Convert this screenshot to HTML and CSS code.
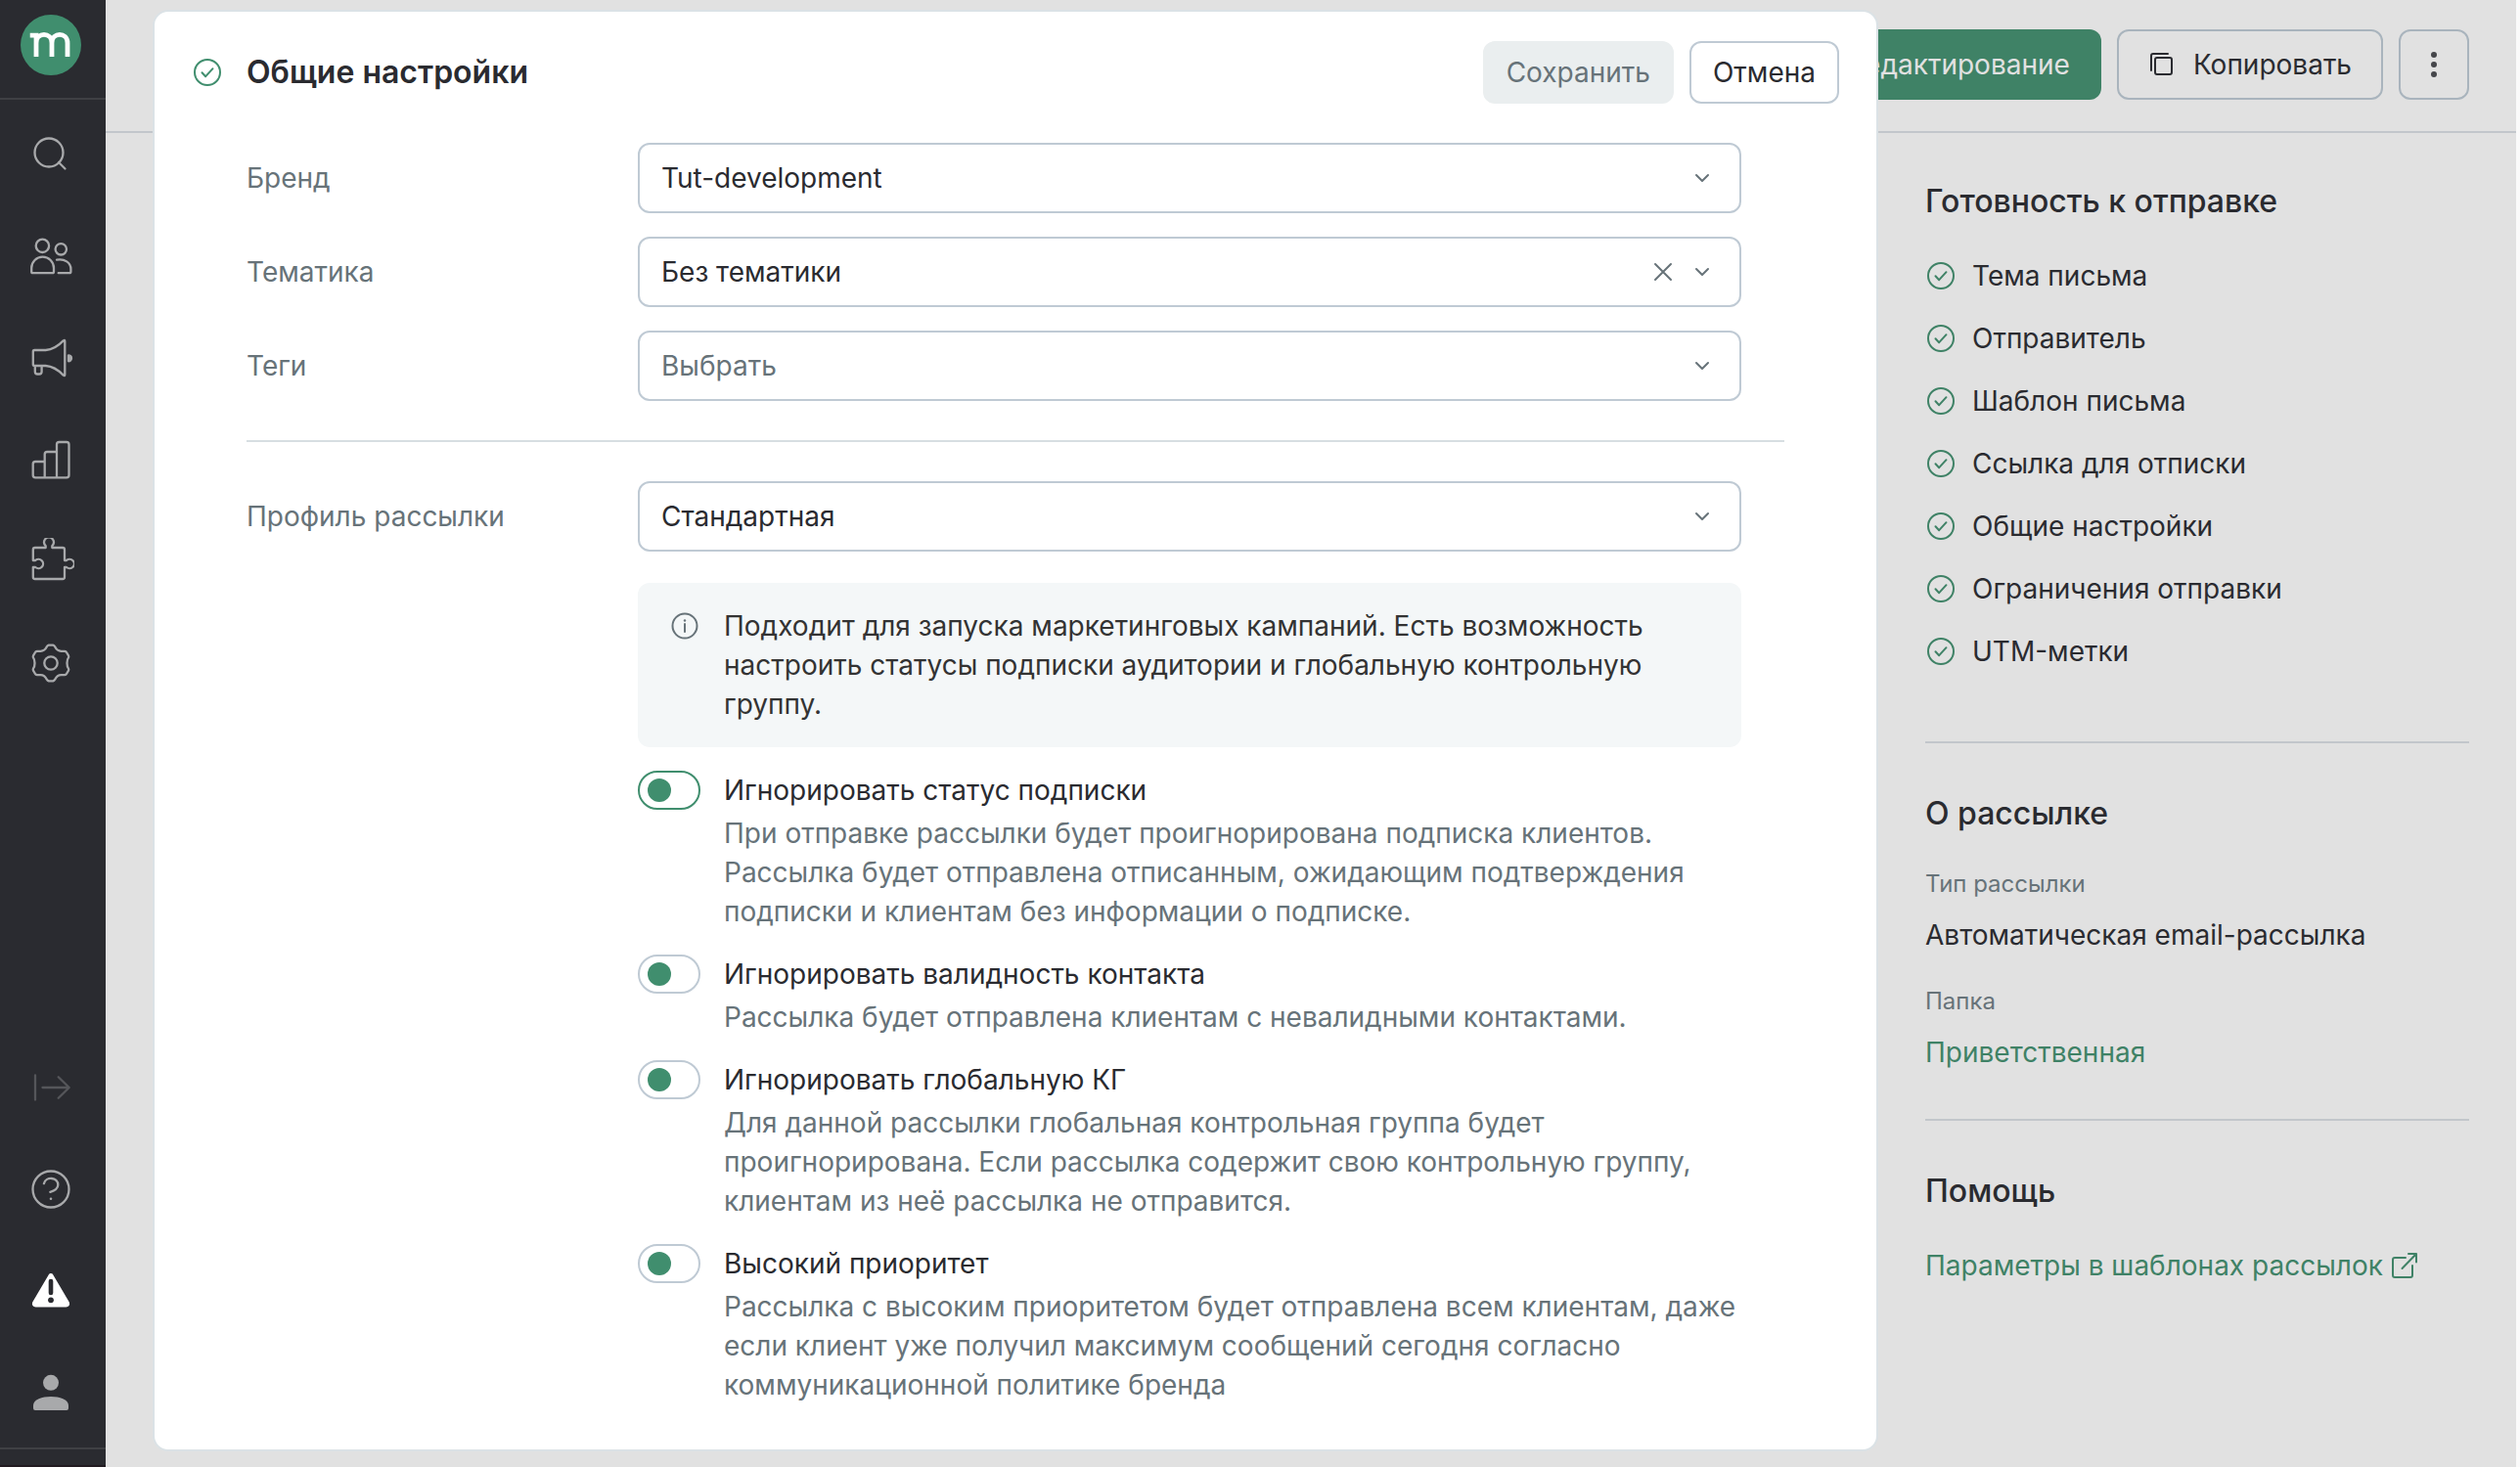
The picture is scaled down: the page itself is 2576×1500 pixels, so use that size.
FILE: index.html
```html
<!DOCTYPE html>
<html lang="ru">
<head>
<meta charset="utf-8">
<meta name="viewport" content="width=device-width, initial-scale=1">
<title>Общие настройки</title>
<link rel="stylesheet" href="styles.css">
</head>
<body>
<svg class="sprite" aria-hidden="true">
  <symbol id="check" viewBox="0 0 32 32">
    <circle cx="16" cy="16" r="13"/><path d="M10.5 16.3l3.7 3.9 7.3-8"/>
  </symbol>
  <symbol id="chevron" viewBox="0 0 16 16"><path d="M2 5l6 6 6-6"/></symbol>
</svg>

<nav class="sidebar" aria-label="Главное меню">
  <a class="logo" href="#" aria-label="Главная">
    <svg viewBox="0 0 64 64"><circle cx="32" cy="32" r="31" fill="#408e6e"/>
      <path d="M10.700 22.200H17V44M17 30C17 18.400 33 18.400 33 30V44M33 30C33 18.400 49 18.400 49 30V44" fill="none" stroke="#fff" stroke-width="4.800"/></svg>
  </a>
  <div class="nav-group">
    <button class="nav-item" aria-label="Поиск"><svg viewBox="0 0 48 48"><circle cx="22" cy="22" r="14.500"/><path d="M32 32l6.500 6.500"/></svg></button>
    <button class="nav-item" aria-label="Клиенты"><svg viewBox="0 0 48 48"><circle cx="15.400" cy="13.300" r="6.700"/><circle cx="34.300" cy="16.800" r="5.700"/><path d="M5.500 41.200h20q1.500 0 1.500-1.500V36a11.300 11.300 0 0 0-22.800 0v3.700q0 1.500 1.300 1.500zM30 27.600c8-1.500 14.400 3 14.400 9.400v2.700q0 1.500-1.500 1.500H31.700"/></svg></button>
    <button class="nav-item" aria-label="Кампании"><svg viewBox="0 0 48 48"><path d="M7.300 16h11.400c7-.5 13.600-5 18-9.600q1.600-1.200 1.600.6v34q0 1.800-1.600.6c-4.400-4.600-11-9.100-18-9.600H7.300q-1.500 0-1.500-1.500v-13q0-1.500 1.500-1.500zM7.800 32v6q0 2.500 2.500 2.500h1.800q2.500 0 2.500-2.500v-6"/><path class="solid" d="M42 21.300a3 3 0 0 1 0 6z"/></svg></button>
    <button class="nav-item" aria-label="Отчёты"><svg viewBox="0 0 48 48"><path d="M17.700 26H8.200q-2.500 0-2.500 2.500V40q0 2.300 2.500 2.300H40q2.500 0 2.500-2.300V8.500Q42.500 6 40 6h-7.500Q30 6 30 8.500v33.800M30 16h-9.800q-2.500 0-2.500 2.500v23.800"/></svg></button>
    <button class="nav-item" aria-label="Интеграции"><svg viewBox="0 0 48 48"><path d="M7.800 10h10.900V8.200a5 5 0 1 1 6.600 0V10H36q2 0 2 2v11h2a4.700 4.700 0 1 1 0 7h-2v10q0 2-2 2H7.800q-2 0-2-2V30h2.400a4.700 4.700 0 1 0 0-7H5.800V12q0-2 2-2z"/></svg></button>
    <button class="nav-item" aria-label="Настройки"><svg viewBox="0 0 48 48"><circle cx="24" cy="24" r="6.700"/><path d="M21.800 5.700h4.400q1.200.3 2 1.600c1.300 2.700 3.300 4.500 6.300 4.500H38q1.500.2 2 1.200l2 3.400q.5 1.200 0 2c-2 2.600-2 8.600 0 11.200q.5.800 0 2L40 35q-.5 1-2 1.200h-3.500c-3 0-5 1.800-6.300 4.500q-.8 1.300-2 1.600h-4.400q-1.200-.3-2-1.600c-1.300-2.700-3.300-4.500-6.300-4.500H10q-1.500-.2-2-1.200l-2-3.400q-.5-1.200 0-2c2-2.600 2-8.600 0-11.200q-.5-.8 0-2L8 13q.5-1 2-1.200h3.500c3 0 5-1.800 6.300-4.500q.8-1.300 2-1.600z"/></svg></button>
  </div>
  <div class="nav-group nav-bottom">
    <button class="nav-item dim" aria-label="Развернуть"><svg viewBox="0 0 48 48"><path d="M8 11.500v25M15.500 24h27M31.700 13.300L42.700 24l-11 10.700"/></svg></button>
    <button class="nav-item" aria-label="Справка"><svg viewBox="0 0 48 48"><circle cx="24" cy="24" r="18.500"/><path d="M16.900 18.200c2-7.600 14.600-6.800 14.400 1.600-.2 4.200-4.500 6-8 7"/><circle class="solid" cx="24" cy="33.700" r="1.300" stroke="none"/></svg></button>
    <button class="nav-item" aria-label="Предупреждения"><svg viewBox="0 0 48 48"><path d="M24 8.500L40.500 36.500Q41 38 39.500 38h-31Q7 38 7.500 36.500z" fill="#fff" stroke="#fff" stroke-width="5" stroke-linejoin="round"/><path d="M24 14l0 12" stroke="#2a2b30" stroke-width="4.600"/><circle cx="24" cy="33.300" r="2.900" fill="#2a2b30" stroke="none"/></svg></button>
    <button class="nav-item" aria-label="Профиль"><svg viewBox="0 0 48 48"><g class="solid" stroke="none"><circle cx="24" cy="13.800" r="8"/><path d="M6 37c0-12 36-12 36 0v3q0 2-2 2H8q-2 0-2-2z"/></g></svg></button>
  </div>
</nav>

<main class="page">
  <header class="topbar">
    <button class="btn btn-primary">Редактирование</button>
    <button class="btn btn-outline"><svg class="copy" viewBox="0 0 24 24"><rect x="5" y="5" width="17" height="17" rx="2"/><path d="M1 18V3q0-2 2-2h15"/></svg>Копировать</button>
    <button class="btn btn-outline btn-dots" aria-label="Ещё"><svg class="dots" viewBox="0 0 32 32"><circle cx="16" cy="6" r="3"/><circle cx="16" cy="16" r="3"/><circle cx="16" cy="26" r="3"/></svg></button>
  </header>

  <aside class="summary">
    <section>
      <h2>Готовность к отправке</h2>
      <ul class="checklist">
        <li><svg class="check"><use href="#check"/></svg>Тема письма</li>
        <li><svg class="check"><use href="#check"/></svg>Отправитель</li>
        <li><svg class="check"><use href="#check"/></svg>Шаблон письма</li>
        <li><svg class="check"><use href="#check"/></svg>Ссылка для отписки</li>
        <li><svg class="check"><use href="#check"/></svg>Общие настройки</li>
        <li><svg class="check"><use href="#check"/></svg>Ограничения отправки</li>
        <li><svg class="check"><use href="#check"/></svg>UTM-метки</li>
      </ul>
    </section>
    <section>
      <h2>О рассылке</h2>
      <dl class="facts">
        <dt>Тип рассылки</dt><dd>Автоматическая email-рассылка</dd>
        <dt>Папка</dt><dd><a href="#">Приветственная</a></dd>
      </dl>
    </section>
    <section>
      <h2>Помощь</h2>
      <a class="help-link" href="#">Параметры в шаблонах рассылок
        <svg viewBox="0 0 28 28"><path d="M15 6H4Q2 6 2 8v16q0 2 2 2h16q2 0 2-2V14M11.500 17L26 2M18 2h8v8.500"/></svg></a>
    </section>
  </aside>

  <section class="dialog" role="dialog" aria-labelledby="dialog-title">
    <header class="dialog-head">
      <svg class="check"><use href="#check"/></svg>
      <h1 id="dialog-title">Общие настройки</h1>
      <button class="btn-small btn-disabled" disabled>Сохранить</button>
      <button class="btn-small">Отмена</button>
    </header>
    <form class="form">
      <div class="fields">
        <label for="brand">Бренд</label>
        <div class="select"><select id="brand"><option>Tut-development</option></select><svg class="chevron"><use href="#chevron"/></svg></div>
        <label for="topic">Тематика</label>
        <div class="select"><select id="topic"><option>Без тематики</option></select><button class="clear" type="button" aria-label="Очистить"><svg viewBox="0 0 24 24"><path d="M4 4l16 16M20 4L4 20"/></svg></button><svg class="chevron"><use href="#chevron"/></svg></div>
        <label for="tags">Теги</label>
        <div class="select"><select id="tags" class="empty"><option>Выбрать</option></select><svg class="chevron"><use href="#chevron"/></svg></div>
      </div>
      <hr>
      <div class="fields">
        <label for="profile">Профиль рассылки</label>
        <div class="select"><select id="profile"><option>Стандартная</option></select><svg class="chevron"><use href="#chevron"/></svg></div>
      </div>
      <div class="options">
        <div class="note">
          <svg viewBox="0 0 32 32"><circle cx="16" cy="16" r="12.500"/><path d="M16 14v8"/><circle cx="16" cy="10.500" r="1.200" fill="#677379" stroke="none"/></svg>
          <p>Подходит для запуска маркетинговых кампаний. Есть возможность настроить статусы подписки аудитории и глобальную контрольную группу.</p>
        </div>
        <div class="option">
          <input class="toggle toggle-active" type="checkbox" id="o1"><label for="o1">Игнорировать статус подписки</label>
          <p>При отправке рассылки будет проигнорирована подписка клиентов. Рассылка будет отправлена отписанным, ожидающим подтверждения подписки и клиентам без информации о подписке.</p>
        </div>
        <div class="option">
          <input class="toggle" type="checkbox" id="o2"><label for="o2">Игнорировать валидность контакта</label>
          <p>Рассылка будет отправлена клиентам с невалидными контактами.</p>
        </div>
        <div class="option">
          <input class="toggle" type="checkbox" id="o3"><label for="o3">Игнорировать глобальную КГ</label>
          <p>Для данной рассылки глобальная контрольная группа будет проигнорирована. Если рассылка содержит свою контрольную группу, клиентам из неё рассылка не отправится.</p>
        </div>
        <div class="option">
          <input class="toggle" type="checkbox" id="o4"><label for="o4">Высокий приоритет</label>
          <p>Рассылка с высоким приоритетом будет отправлена всем клиентам, даже если клиент уже получил максимум сообщений сегодня согласно коммуникационной политике бренда</p>
        </div>
      </div>
    </form>
  </section>
</main>
</body>
</html>
```
FILE: styles.css
```css
:root {
  --green: #408e6e;
  --green-dim: #3f8266;
  --ink: #2a2b30;
  --muted: #677379;
  --line: #bfcad4;
  --line-dim: #c2c6cb;
}

* { box-sizing: border-box; }

body {
  margin: 0;
  min-height: 100vh;
  display: flex;
  background: #fafafa;
  color: var(--ink);
  font: 28px/40px Inter, "Noto Sans", sans-serif;
}

h1, h2, p, ul, dl, dd { margin: 0; padding: 0; }
button, select { font: inherit; color: inherit; }
svg { display: block; flex: none; fill: none; stroke-linecap: round; stroke-linejoin: round; }
a { color: var(--green-dim); text-decoration: none; }
.sprite { display: none; }

/* Sidebar */
.sidebar {
  flex: none;
  width: 108px;
  display: flex;
  flex-direction: column;
  background: var(--ink);
  border-bottom: 2px solid #211a20;
}
.logo {
  height: 102px;
  padding: 14px 20px;
  border-bottom: 2px solid #3f4044;
}
.logo svg { width: 64px; height: 64px; stroke-linecap: butt; stroke-linejoin: miter; }
.nav-group { padding: 4px 4px 4px 0; }
.nav-bottom {
  margin-top: auto;
  margin-bottom: 16px;
  border-bottom: 2px solid #3f4044;
}
.nav-item {
  display: grid;
  place-items: center;
  width: 100%;
  height: 104px;
  padding: 0;
  border: 0;
  background: none;
}
.nav-item svg { width: 48px; height: 48px; stroke: #a8a9ab; stroke-width: 2.3; }
.nav-item .solid { fill: #a8a9ab; }
.nav-item.dim svg { stroke: #55565a; }

/* Page under the dialog */
.page {
  position: relative;
  flex: 1;
  margin-right: 4px;
  background: #e1e1e1;
}
.topbar {
  display: flex;
  justify-content: flex-end;
  gap: 16px;
  padding: 30px 48px 32px;
  border-bottom: 2px solid var(--line-dim);
}
.btn {
  display: flex;
  align-items: center;
  height: 72px;
  padding: 0 30px 0 32px;
  border: 2px solid transparent;
  border-radius: 12px;
  background: none;
}
.btn-primary { background: var(--green-dim); color: #e1e1e1; }
.btn-outline { border-color: #a9b4bd; gap: 20px; }
.btn-dots { width: 72px; padding: 0; justify-content: center; }
.copy { width: 24px; height: 24px; stroke: var(--ink); stroke-width: 2; }
.dots { width: 32px; height: 32px; fill: #45464a; }

.check { width: 32px; height: 32px; stroke: var(--green-dim); stroke-width: 2; }
.summary {
  width: 556px;
  margin-left: auto;
  margin-right: 48px;
}
.summary section { padding: 50px 0 68px; }
.summary section + section { padding-top: 52px; border-top: 2px solid var(--line-dim); }
.summary h2 { font-size: 32px; font-weight: 500; }
.summary section:nth-child(2) { padding-bottom: 48px; }
.checklist { list-style: none; margin-bottom: -8px; padding: 24px 0 0; }
.checklist li { display: flex; align-items: center; gap: 16px; height: 64px; }
.facts dt { margin-top: 32px; font-size: 24px; color: var(--muted); }
.facts dd { margin-top: 12px; }
.facts dd + dt { margin-top: 28px; }
.help-link { display: flex; align-items: center; gap: 8px; margin-top: 36px; }
.help-link svg { width: 28px; height: 28px; stroke: var(--green-dim); stroke-width: 2; }

/* Dialog */
.dialog {
  position: absolute;
  top: 10px;
  left: 48px;
  right: 652px;
  padding-bottom: 46px;
  border: 2px solid #dbe2e6;
  border-radius: 16px;
  background: #fff;
}
.dialog-head {
  display: flex;
  align-items: center;
  gap: 16px;
  padding: 30px 38px 0;
}
.dialog-head .check { stroke: var(--green); }
.dialog-head h1 { flex: 1; padding-left: 8px; font-size: 32px; font-weight: 600; }
.btn-small {
  height: 64px;
  padding: 0 22px;
  border: 2px solid var(--line);
  border-radius: 12px;
  background: #fff;
}
.btn-disabled { border-color: #eaeeef; background: #eaeeef; color: var(--muted); }

.form { padding: 40px 94px 0; }
.fields {
  display: grid;
  grid-template-columns: 400px 1fr;
  align-items: center;
  row-gap: 24px;
  padding-right: 44px;
}
.fields label { color: var(--muted); }
.form hr { height: 2px; margin: 40px 0; border: 0; background: #d7dee2; }
.select { position: relative; }
.select select {
  display: block;
  width: 100%;
  height: 72px;
  padding: 0 104px 0 22px;
  border: 2px solid var(--line);
  border-radius: 12px;
  background: #fff;
  appearance: none;
}
.select .empty { color: var(--muted); }
.chevron {
  position: absolute;
  top: 28px;
  right: 32px;
  width: 16px;
  height: 16px;
  stroke: var(--muted);
  stroke-width: 2;
  pointer-events: none;
}
.clear {
  position: absolute;
  top: 24px;
  right: 68px;
  padding: 0;
  border: 0;
  background: none;
}
.clear svg { width: 24px; height: 24px; stroke: var(--muted); stroke-width: 2; }

.options {
  display: grid;
  gap: 24px;
  margin: 32px 44px 0 400px;
}
.note {
  display: flex;
  gap: 24px;
  padding: 24px 32px;
  border-radius: 12px;
  background: #f4f7f8;
  color: #333;
}
.note svg { width: 32px; height: 32px; margin-top: 4px; stroke: var(--muted); stroke-width: 2; }
.note p { margin-left: 2px; margin-left: 0; }
.option {
  display: grid;
  grid-template-columns: 64px 1fr;
  gap: 4px 24px;
}
.option p { grid-column: 2; color: var(--muted); }
.toggle {
  width: 64px;
  height: 40px;
  margin: 0;
  padding: 6px 8px;
  border: 2px solid var(--line);
  border-radius: 20px;
  background: #fff;
  appearance: none;
}
.toggle::before {
  content: "";
  display: block;
  width: 24px;
  height: 24px;
  border-radius: 50%;
  background: var(--green);
}
.toggle:checked::before { margin-left: auto; }
.toggle-active { border-color: var(--green); }
```
